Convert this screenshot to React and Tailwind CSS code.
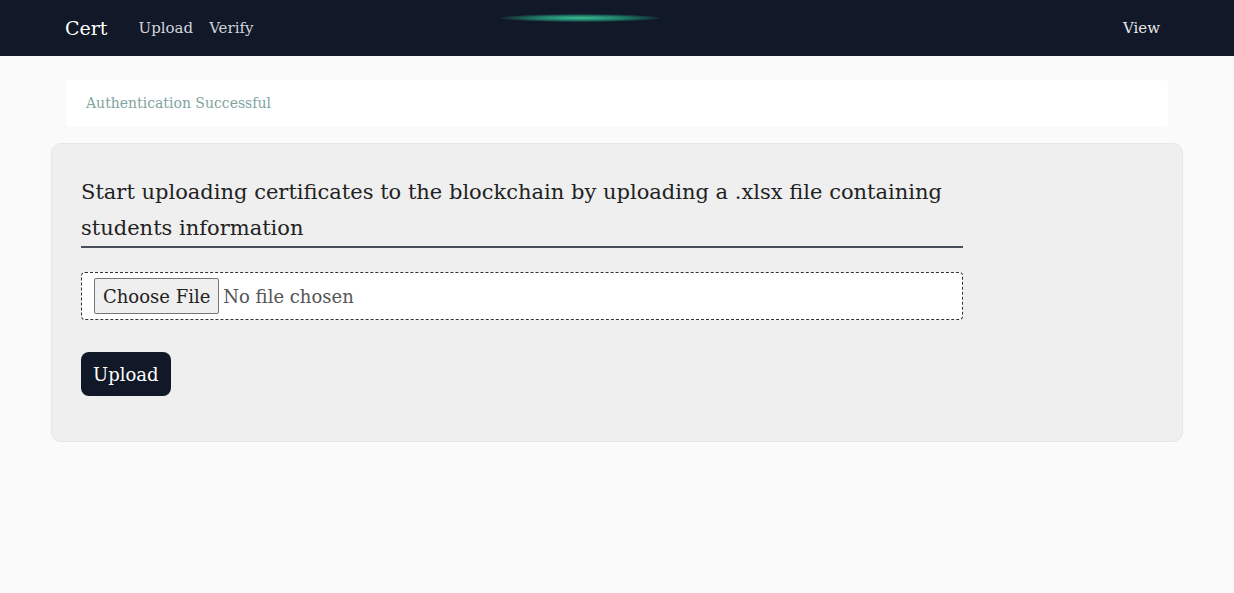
export default function App() {
  return (
    <div className="min-h-screen bg-[#fafafa] font-['DejaVu_Serif',serif]">
      <nav className="h-14 bg-[#111827] flex items-center justify-between px-[65px] relative">
        <div className="flex items-center gap-[31px]">
          <span className="text-white text-[19px]">Cert</span>
          <div className="flex items-center gap-4 text-[15px] text-gray-300">
            <a href="#">Upload</a>
            <a href="#">Verify</a>
          </div>
        </div>
        <div className="absolute left-[500px] top-[14px] w-[160px] h-[8px] rounded-[50%] bg-[radial-gradient(ellipse_at_center,#3fbf94_0%,#1f7a66_40%,rgba(17,24,39,0)_75%)]" />
        <a href="#" className="text-[15px] text-gray-200 mr-[9px]">View</a>
      </nav>

      <div className="px-[51px] pt-6">
        <div className="mx-[15px] bg-white rounded-sm h-[47px] flex items-center px-5">
          <span className="text-[14px] text-[#7fa59f]">Authentication Successful</span>
        </div>

        <div className="mt-4 bg-[#efefef] rounded-[10px] border border-[#e6e6e6] px-[29px] pt-[30px] pb-[45px]">
          <h2 className="w-[882px] text-[21px] leading-9 text-[#222] border-b-2 border-[#4a4f57]">
            Start uploading certificates to the blockchain by uploading a .xlsx file containing students information
          </h2>

          <label className="mt-[24px] w-[882px] h-12 bg-white border border-dashed border-[#333] rounded-[4px] flex items-center px-3 gap-1 cursor-pointer">
            <input type="file" className="hidden" />
            <span className="h-9 px-2 flex items-center bg-[#efefef] border border-[#767676] rounded-[2px] text-[18px] text-[#222]">
              Choose File
            </span>
            <span className="text-[18px] text-[#555]">No file chosen</span>
          </label>

          <button className="mt-8 h-11 px-3 bg-[#111827] text-white text-[18px] rounded-lg">
            Upload
          </button>
        </div>
      </div>
    </div>
  );
}
